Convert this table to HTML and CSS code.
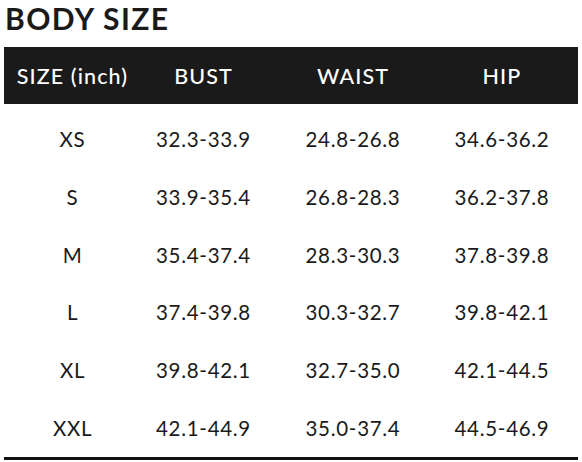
FILE: index.html
```html
<!DOCTYPE html>
<html lang="en">
<head>
<meta charset="utf-8">
<title>Body Size</title>
<link rel="stylesheet" href="styles.css">
</head>
<body>
<div class="page">
  <h1 class="title">BODY SIZE</h1>
  <div class="table">
    <div class="row head">
      <div class="cell">SIZE (inch)</div>
      <div class="cell">BUST</div>
      <div class="cell">WAIST</div>
      <div class="cell">HIP</div>
    </div>
    <div class="body">
      <div class="row"><div class="cell">XS</div><div class="cell">32.3-33.9</div><div class="cell">24.8-26.8</div><div class="cell">34.6-36.2</div></div>
      <div class="row"><div class="cell">S</div><div class="cell">33.9-35.4</div><div class="cell">26.8-28.3</div><div class="cell">36.2-37.8</div></div>
      <div class="row"><div class="cell">M</div><div class="cell">35.4-37.4</div><div class="cell">28.3-30.3</div><div class="cell">37.8-39.8</div></div>
      <div class="row"><div class="cell">L</div><div class="cell">37.4-39.8</div><div class="cell">30.3-32.7</div><div class="cell">39.8-42.1</div></div>
      <div class="row"><div class="cell">XL</div><div class="cell">39.8-42.1</div><div class="cell">32.7-35.0</div><div class="cell">42.1-44.5</div></div>
      <div class="row"><div class="cell">XXL</div><div class="cell">42.1-44.9</div><div class="cell">35.0-37.4</div><div class="cell">44.5-46.9</div></div>
    </div>
  </div>
</div>
</body>
</html>
```
FILE: styles.css
```css
html, body {
  margin: 0;
  padding: 0;
  background: #ffffff;
}
body {
  font-family: "Lato", "Open Sans", sans-serif;
  color: #1a1a1a;
}
.page {
  padding: 0 4px 0 4px;
  width: 574px;
}
.title {
  margin: 0;
  padding-left: 1px;
  font-size: 30px;
  line-height: 36px;
  font-weight: 700;
  letter-spacing: 1.4px;
  height: 47px;
  box-sizing: border-box;
  color: #1a1a1a;
}
.table {
  display: flex;
  flex-direction: column;
}
.row {
  display: grid;
  grid-template-columns: 137px 125px 174px 138px;
  align-items: center;
  height: 57.7px;
}
.row .cell {
  text-align: center;
  font-size: 20.5px;
  letter-spacing: 0.7px;
}
.row .cell:last-child {
  padding-right: 14px;
}
.head {
  background: #1a1a1a;
  color: #ffffff;
  height: 57px;
}
.head .cell {
  font-size: 21.5px;
  font-weight: 500;
  letter-spacing: 1.1px;
}
.body {
  padding-top: 6.5px;
  border-bottom: 3px solid #111111;
}
```
